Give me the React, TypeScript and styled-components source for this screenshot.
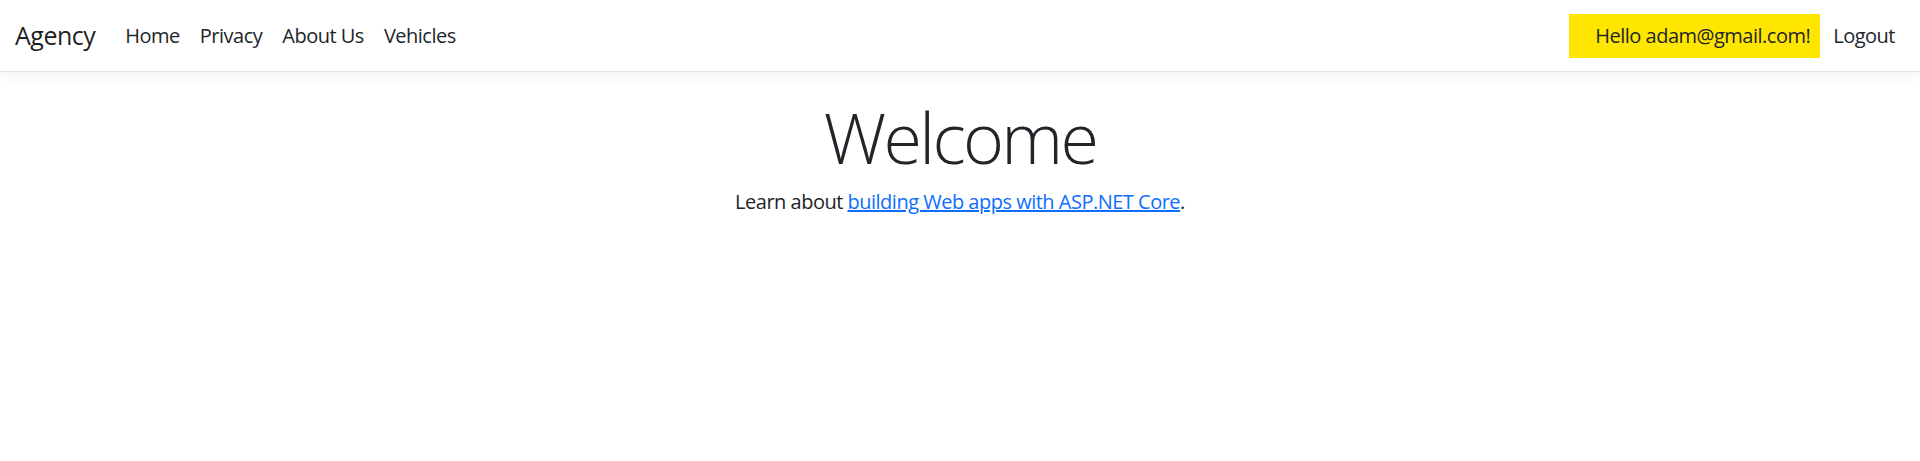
import React from "react";
import styled, { createGlobalStyle } from "styled-components";

const GlobalStyle = createGlobalStyle`
  html, body { margin: 0; padding: 0; background: #fff; }
  body {
    font-family: "Open Sans", "Noto Sans", sans-serif;
    font-size: 20px;
    line-height: 1.5;
    letter-spacing: -0.5px;
    color: #212529;
  }
  * { box-sizing: border-box; }
`;

const Header = styled.header`
  background: #fff;
  border-bottom: 1px solid #dee2e6;
  box-shadow: 0 5px 15px rgba(0, 0, 0, 0.05);
  position: relative;
  z-index: 1;
`;

const NavBar = styled.nav`
  height: 71px;
  display: flex;
  align-items: center;
  padding: 1px 15px 0;
`;

const Brand = styled.a`
  font-size: 25px;
  color: rgba(0, 0, 0, 0.9);
  text-decoration: none;
  margin-right: 20px;
  line-height: 1.5;
`;

const NavList = styled.ul<{ $grow?: boolean }>`
  display: flex;
  align-items: center;
  list-style: none;
  margin: 0;
  padding: 0;
  flex: ${(p) => (p.$grow ? 1 : "none")};
`;

const NavLink = styled.a<{ $highlight?: boolean }>`
  display: block;
  color: #212529;
  text-decoration: none;
  line-height: 24px;
  padding: ${(p) => (p.$highlight ? "10px 10px 10px 26px" : "10px")};
  background: ${(p) => (p.$highlight ? "#ffe600" : "transparent")};
  margin-right: ${(p) => (p.$highlight ? "3px" : "0")};
`;

const Main = styled.main`
  padding: 20px 15px 0;
  text-align: center;
`;

const Title = styled.h1`
  font-size: 70px;
  font-weight: 300;
  line-height: 1.2;
  letter-spacing: -2.7px;
  padding-top: 3px;
  margin: 0 0 8px;
`;

const Lead = styled.p`
  margin: 0;
  font-size: 20px;
`;

const Link = styled.a`
  color: #0d6efd;
  text-decoration: underline;
`;

export default function App() {
  return (
    <>
      <GlobalStyle />
      <Header>
        <NavBar>
          <Brand href="#">Agency</Brand>
          <NavList $grow>
            <li><NavLink href="#">Home</NavLink></li>
            <li><NavLink href="#">Privacy</NavLink></li>
            <li><NavLink href="#">About Us</NavLink></li>
            <li><NavLink href="#">Vehicles</NavLink></li>
          </NavList>
          <NavList>
            <li><NavLink $highlight href="#">Hello adam@gmail.com!</NavLink></li>
            <li><NavLink href="#">Logout</NavLink></li>
          </NavList>
        </NavBar>
      </Header>
      <Main>
        <Title>Welcome</Title>
        <Lead>
          Learn about <Link href="#">building Web apps with ASP.NET Core</Link>.
        </Lead>
      </Main>
    </>
  );
}
